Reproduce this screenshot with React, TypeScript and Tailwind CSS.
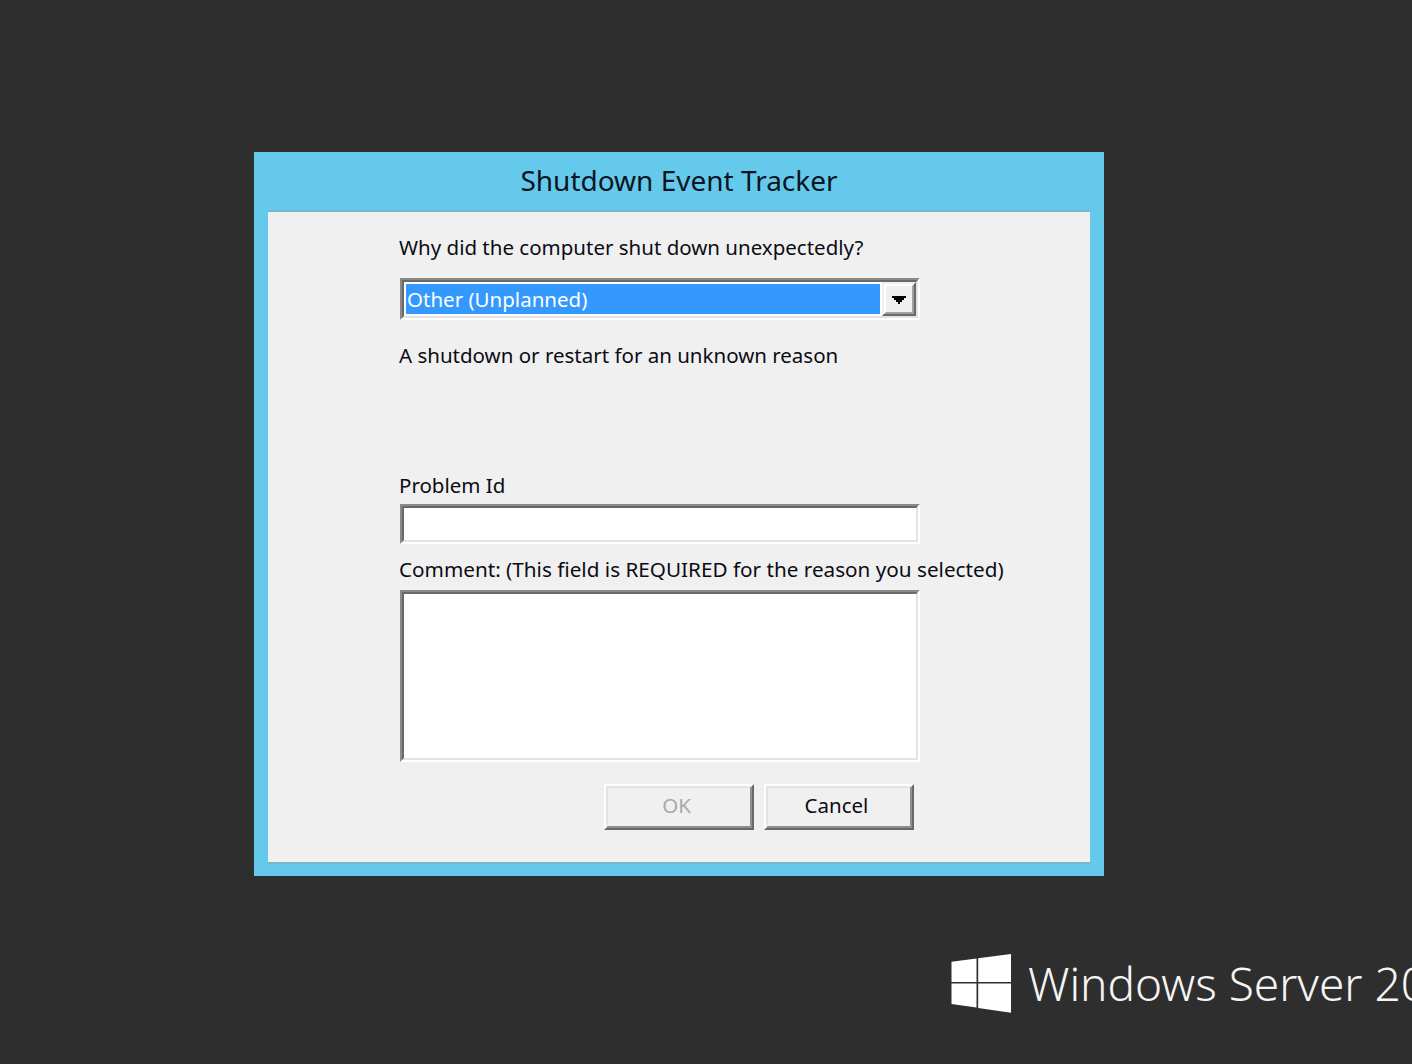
const uiFont = { fontFamily: '"Noto Sans", "Open Sans", sans-serif' };

const Sunken = ({ className, children }: { className: string; children?: React.ReactNode }) => (
  <div className={`ml-[1px] w-[520px] border-[2px] border-t-[#8a8a8a] border-l-[#8a8a8a] border-r-white border-b-white ${className}`}>
    <div className="h-full border-[2px] border-t-[#696969] border-l-[#696969] border-r-[#e3e3e3] border-b-[#e3e3e3] bg-white">
      {children}
    </div>
  </div>
);

const DialogButton = ({ label, disabled }: { label: string; disabled?: boolean }) => (
  <div className="h-[46px] w-[150px] border-[2px] border-t-white border-l-white border-r-[#696969] border-b-[#696969]">
    <div className="flex h-full items-center justify-center border-[2px] border-t-[#e3e3e3] border-l-[#e3e3e3] border-r-[#8f8f8f] border-b-[#8f8f8f] bg-[#f0f0f0] pb-[3px] pr-[5px]">
      <span className={`text-[20.5px] leading-none ${disabled ? "text-[#a8a8a8]" : "text-[#0c0c14]"}`}>{label}</span>
    </div>
  </div>
);

const WindowsLogo = () => (
  <svg width="60" height="60" viewBox="0 0 60 60" className="shrink-0">
    <path d="M0.5 8.7 L25.5 5.5 V29 H0.5 Z" fill="#fff" />
    <path d="M27.2 5.2 L60 1 V29 H27.2 Z" fill="#fff" />
    <path d="M0.5 30.5 H25.5 V54.6 L0.5 51 Z" fill="#fff" />
    <path d="M27.2 30.5 H60 V59.7 L27.2 54.9 Z" fill="#fff" />
  </svg>
);

export default function App() {
  return (
    <div className="h-[1064px] w-[1412px] overflow-hidden bg-[#2e2e2e]" style={uiFont}>
      <div className="pl-[254px] pt-[152px]">
        {/* Dialog */}
        <div className="flex h-[724px] w-[850px] flex-col bg-[#64c9eb] px-[14px] pb-[12px]">
          <div className="flex h-[58px] items-center justify-center pb-[3px] text-[28px] leading-none text-[#0c1420]">
            Shutdown Event Tracker
          </div>
          <div className="flex-1 border-y-[2px] border-t-[#7cb4cc] border-b-[#7cb4cc] bg-[#f0f0f0] pl-[131px] text-[20.5px] leading-[21px] text-[#0c0c14]">
            <div className="pt-[25px]">Why did the computer shut down unexpectedly?</div>

            <Sunken className="mt-[20px] h-[42px]">
              <div className="flex h-full">
                <div className="m-[2px] flex flex-1 items-center bg-[#3399ff] pl-[1px] text-white">Other (Unplanned)</div>
                <div className="border-[2px] border-t-[#f0f0f0] border-l-[#f0f0f0] border-r-[#696969] border-b-[#696969]">
                  <div className="flex h-full w-[30px] items-center justify-center border-[2px] border-t-white border-l-white border-r-[#a0a0a0] border-b-[#a0a0a0] bg-[#f0f0f0] pt-[1px]">
                    <svg width="14" height="8" viewBox="0 0 14 8">
                      <path d="M0 0 H14 V2 H12 V4 H10 V6 H8 V8 H6 V6 H4 V4 H2 V2 H0 Z" fill="#000" />
                    </svg>
                  </div>
                </div>
              </div>
            </Sunken>

            <div className="pt-[25px]">A shutdown or restart for an unknown reason</div>

            <div className="pt-[109px]">Problem Id</div>
            <Sunken className="mt-[8px] h-[40px]" />

            <div className="pt-[15px] text-[20.7px]">Comment: (This field is REQUIRED for the reason you selected)</div>
            <Sunken className="mt-[10px] h-[172px]" />

            <div className="ml-[205px] mt-[22px] flex gap-[10px]">
              <DialogButton label="OK" disabled />
              <DialogButton label="Cancel" />
            </div>
          </div>
        </div>
      </div>

      {/* Branding */}
      <div className="ml-[951px] mt-[77px] flex w-[461px] items-center gap-[17px] overflow-hidden whitespace-nowrap">
        <WindowsLogo />
        <span className="text-[46px] font-light leading-none text-[#f4f4f4]">Windows Server 2012</span>
      </div>
    </div>
  );
}
